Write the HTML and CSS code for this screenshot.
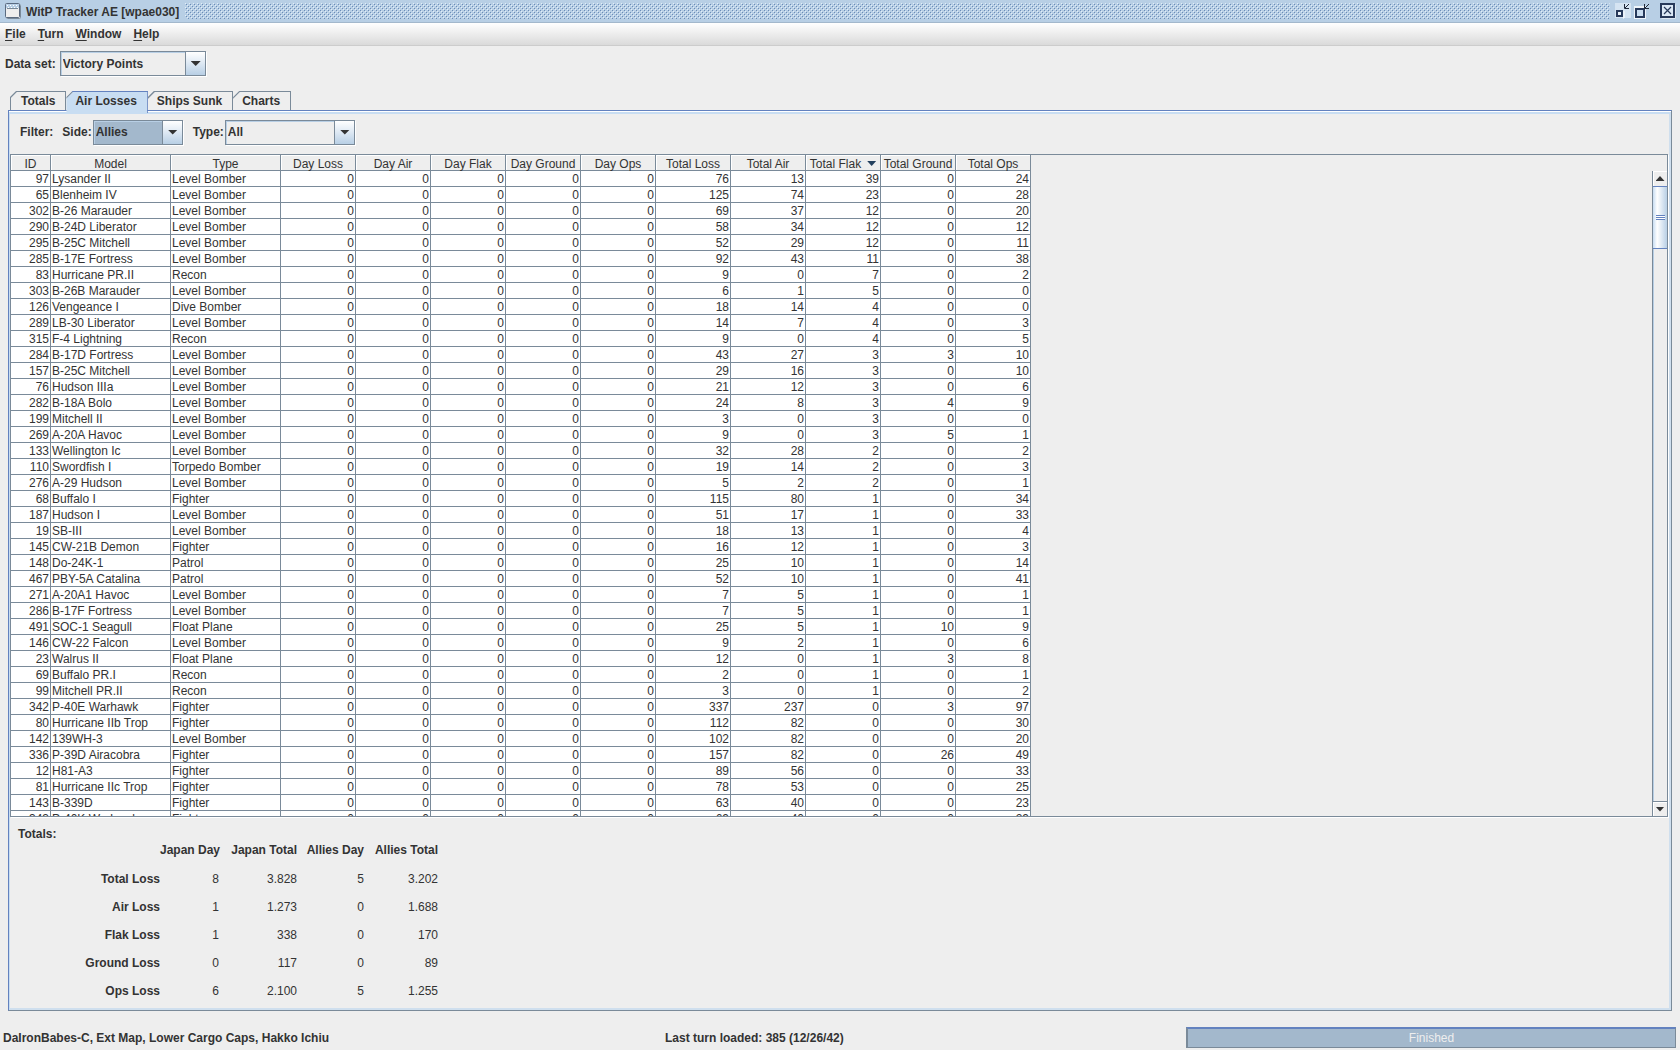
FILE: index.html
```html
<!DOCTYPE html>
<html lang="en">
<head>
<meta charset="utf-8">
<title>WitP Tracker AE [wpae030]</title>
<link rel="stylesheet" href="styles.css">
</head>
<body>
<header class="titlebar">
  <svg class="app-icon" width="16" height="16" aria-hidden="true">
    <rect x="1.5" y="1.5" width="14" height="14" rx="1" fill="#fff" stroke="#7a8a99"/>
    <rect x="0.5" y="0.5" width="14" height="14" rx="1" fill="#eee" stroke="#5b6b80"/>
    <rect x="1" y="1" width="13" height="4" fill="#b8cfe5"/>
    <path d="M2 2.5h11M3 4.5h10" stroke="#fff" stroke-dasharray="1 2"/>
    <path d="M2 5.5h11" stroke="#7a8a99"/>
  </svg>
  <h1 class="title">WitP Tracker AE [wpae030]</h1>
  <svg class="bumps" aria-hidden="true">
    <defs>
      <pattern id="bump" width="4" height="4" patternUnits="userSpaceOnUse">
        <rect width="1" height="1" fill="#e2edf8"/><rect x="1" y="1" width="1" height="1" fill="#6b8cb8"/>
        <rect x="2" y="2" width="1" height="1" fill="#e2edf8"/><rect x="3" y="3" width="1" height="1" fill="#6b8cb8"/>
      </pattern>
    </defs>
    <rect width="100%" height="100%" fill="url(#bump)"/>
  </svg>
  <div class="window-buttons">
    <button class="window-button" aria-label="Minimize">
      <svg width="16" height="16"><path d="M0 0h16v15H0z" fill="#d5e4f2"/><path d="M8 15h1V8" fill="none" stroke="#fff"/><rect x="2" y="8" width="5" height="5" fill="#e8f0f8" stroke="#27395a" stroke-width="2"/><path d="M14 1L10 5M9.500 1v4.500H14" fill="none" stroke="#1c2638"/></svg>
    </button>
    <button class="window-button" aria-label="Restore">
      <svg width="16" height="16"><path d="M0 3h12v13H0z" fill="#eef4fa"/><rect x="2" y="6" width="8" height="8" fill="#c9dcef" stroke="#27395a" stroke-width="2"/><path d="M15 1L11 5M10.500 1v4.500H15" fill="none" stroke="#1c2638"/></svg>
    </button>
    <button class="window-button close" aria-label="Close">
      <svg width="16" height="16"><rect x="2" y="2" width="13" height="13" fill="none" stroke="#fff"/><rect x="1" y="1" width="13" height="13" fill="#dbe8f5" stroke="#27395a" stroke-width="2"/><path d="M4 4l7 7M11 4l-7 7" stroke="#27395a" stroke-width="1.200"/></svg>
    </button>
  </div>
</header>
<nav class="menubar">
  <button class="menu"><u>F</u>ile</button>
  <button class="menu"><u>T</u>urn</button>
  <button class="menu"><u>W</u>indow</button>
  <button class="menu"><u>H</u>elp</button>
</nav>
<div class="toolbar">
  <label for="dataset">Data set:</label>
  <span class="combo combo-dataset"><select id="dataset"><option>Victory Points</option></select></span>
</div>
<main class="workspace">
  <div class="tabs" role="tablist">
    <button class="tab" role="tab" aria-selected="false">Totals</button>
    <button class="tab selected" role="tab" aria-selected="true">Air Losses</button>
    <button class="tab" role="tab" aria-selected="false">Ships Sunk</button>
    <button class="tab" role="tab" aria-selected="false">Charts</button>
  </div>
  <section class="panel" role="tabpanel">
    <div class="filters">
      <span class="filter-title">Filter:</span>
      <label for="side">Side:</label>
      <span class="combo combo-side"><select id="side"><option>Allies</option></select></span>
      <label class="type-label" for="type">Type:</label>
      <span class="combo combo-type"><select id="type"><option>All</option></select></span>
    </div>
    <div class="scrollpane">
      <div class="viewport">
        <table class="losses">
          <colgroup><col class="col-id"><col class="col-model"><col class="col-type"><col class="col-num" span="10"></colgroup>
          <thead>
            <tr><th>ID</th><th>Model</th><th>Type</th><th>Day Loss</th><th>Day Air</th><th>Day Flak</th><th>Day Ground</th><th>Day Ops</th><th>Total Loss</th><th>Total Air</th><th class="sorted">Total Flak</th><th>Total Ground</th><th>Total Ops</th></tr>
          </thead>
          <tbody id="loss-rows"></tbody>
        </table>
      </div>
      <div class="scrollbar">
        <button class="scroll-button up" aria-label="Scroll up"></button>
        <div class="track"><div class="thumb"></div></div>
        <button class="scroll-button down" aria-label="Scroll down"></button>
      </div>
    </div>
    <div class="summary">
      <h2 class="summary-title">Totals:</h2>
      <table class="totals">
        <colgroup><col class="sum-label"><col class="sum-a"><col class="sum-b"><col class="sum-c"><col class="sum-d"></colgroup>
        <thead><tr><td></td><th>Japan Day</th><th>Japan Total</th><th>Allies Day</th><th>Allies Total</th></tr></thead>
        <tbody>
          <tr><th>Total Loss</th><td>8</td><td>3.828</td><td>5</td><td>3.202</td></tr>
          <tr><th>Air Loss</th><td>1</td><td>1.273</td><td>0</td><td>1.688</td></tr>
          <tr><th>Flak Loss</th><td>1</td><td>338</td><td>0</td><td>170</td></tr>
          <tr><th>Ground Loss</th><td>0</td><td>117</td><td>0</td><td>89</td></tr>
          <tr><th>Ops Loss</th><td>6</td><td>2.100</td><td>5</td><td>1.255</td></tr>
        </tbody>
      </table>
    </div>
  </section>
</main>
<footer class="status">
  <span>DaIronBabes-C, Ext Map, Lower Cargo Caps, Hakko Ichiu</span>
  <span>Last turn loaded: 385 (12/26/42)</span>
  <div class="progress">Finished</div>
</footer>
<script src="app.js"></script>
</body>
</html>
```
FILE: styles.css
```css
* { box-sizing: border-box; }

:root {
  --line: #7a8a99;
  --blue: #6382bf;
  --tint: #c8ddf2;
  --face: #eeeeee;
  --text: #333333;
}

body {
  margin: 0;
  height: 100vh;
  display: flex;
  flex-direction: column;
  overflow: hidden;
  background: var(--face);
  color: var(--text);
  font: bold 12px/16px "Liberation Sans", Arial, sans-serif;
}

button, select { font: inherit; color: inherit; margin: 0; padding: 0; border: 0; background: none; }

/* Title bar */
.titlebar {
  display: flex;
  align-items: center;
  flex: none;
  height: 23px;
  padding: 0 4px 0 5px;
  background: #b8cfe5;
  border-bottom: 1px solid #a3b8cc;
}
.app-icon { flex: none; margin-right: 5px; }
.title { margin: 0 6px 0 0; padding-top: 1px; font-size: 12px; }
.bumps { flex: 1; min-width: 0; height: 16px; }
.window-buttons { display: flex; gap: 3px; margin-left: 5px; }
.window-button { display: flex; width: 16px; height: 16px; }
.close { margin-left: 7px; }

/* Menu bar */
.menubar {
  display: flex;
  flex: none;
  gap: 12px;
  height: 23px;
  padding: 0 5px;
  background: linear-gradient(#ffffff, #dadada);
  border-bottom: 1px solid #cccccc;
}
.menu u { text-underline-offset: 2px; }

/* Combo boxes */
.toolbar { display: flex; align-items: center; flex: none; gap: 4px; height: 36px; padding: 0 5px 1px; }
.combo { display: grid; height: 25px; border: 1px solid var(--line); box-shadow: inset 1px 1px #b8cfe5, 1px 1px #ffffff; }
.combo::before {
  content: "";
  grid-area: 1 / 1;
  justify-self: end;
  width: 19px;
  border-left: 1px solid var(--line);
  background: linear-gradient(#ffffff, #dde8f3 50%, #b8cfe5);
}
.combo::after {
  content: "";
  grid-area: 1 / 1;
  place-self: center end;
  width: 10px;
  height: 5px;
  margin-right: 4px;
  background: var(--text);
  clip-path: polygon(0 0, 100% 0, 50% 100%);
  pointer-events: none;
}
.combo select { grid-area: 1 / 1; min-width: 0; padding-left: 2px; appearance: none; outline: 0; }
.combo-dataset { width: 146px; }
.combo-side { width: 90px; background: #a3b8cc; }
.combo-type { width: 130px; }

/* Tabs */
.workspace { display: flex; flex: 1; flex-direction: column; min-height: 0; padding: 9px 8px 0; }
.tabs { display: flex; flex: none; height: 19px; padding-left: 2px; }
.tab {
  height: 19px;
  padding: 0 10px 0 9px;
  border-top: 1px solid var(--line);
  border-right: 1px solid var(--line);
  background: linear-gradient(135deg, var(--line) 0 5px, transparent 6px) border-box;
  clip-path: polygon(0 6px, 6px 0, 100% 0, 100% 100%, 0 100%);
}
.tab:first-child { padding-left: 10px; border-left: 1px solid var(--line); }
.tab.selected {
  position: relative;
  height: 22px;
  margin-bottom: -3px;
  padding-bottom: 3px;
  border-color: var(--blue);
  background: linear-gradient(135deg, var(--line) 0 5px, var(--tint) 6px) border-box;
}

.panel {
  display: flex;
  flex: 1;
  flex-direction: column;
  min-height: 0;
  padding: 2px 1px;
  border: 1px solid var(--line);
  border-top-color: var(--blue);
  border-left-color: var(--blue);
  box-shadow: inset 0 1px #ffffff, inset 1px 3px var(--tint), inset -2px -2px #cfdfee;
}
.filters { display: flex; align-items: center; flex: none; height: 41px; padding: 0 10px 3px; gap: 1px; }
.filter-title { margin-right: 8px; }
.type-label { margin-left: 9px; }

/* Loss table */
.scrollpane {
  display: flex;
  flex: 1;
  min-height: 0;
  margin-right: 2px;
  border: 1px solid var(--line);
  box-shadow: 1px 1px #ffffff;
}
.viewport { flex: 1; min-width: 0; overflow: hidden; }
.losses { width: 1020px; table-layout: fixed; border-spacing: 0; font-weight: normal; line-height: 13px; }
.col-id { width: 40px; }
.col-model { width: 120px; }
.col-type { width: 110px; }
.col-num { width: 75px; }
.losses th, .losses td {
  height: 16px;
  padding: 2px 1px 0;
  border-right: 1px solid var(--line);
  border-bottom: 1px solid var(--line);
  white-space: nowrap;
}
.losses th { padding-top: 4px; font-weight: normal; line-height: 11px; background: var(--face); box-shadow: inset 1px 1px #ffffff; }
.losses td { text-align: right; background: #ffffff; }
.losses td.name { text-align: left; }
.sorted::after {
  content: "";
  display: inline-block;
  width: 9px;
  height: 5px;
  margin: 0 0 2px 6px;
  background: #24405e;
  clip-path: polygon(0 0, 100% 0, 50% 100%);
}

.scrollbar { display: flex; flex: none; flex-direction: column; width: 15px; margin-top: 16px; border-left: 1px solid var(--line); }
.scroll-button { display: grid; flex: none; place-content: center; height: 15px; box-shadow: inset 1px 1px #ffffff; }
.scroll-button::before { content: ""; width: 9px; height: 5px; background: var(--text); }
.up::before { clip-path: polygon(50% 0, 100% 100%, 0 100%); }
.down::before { clip-path: polygon(0 0, 100% 0, 50% 100%); }
.down { border-top: 1px solid var(--line); }
.track { flex: 1; box-shadow: inset 1px 0 #b8cfe5; }
.thumb {
  display: grid;
  height: 63px;
  place-content: center;
  border: solid var(--blue);
  border-width: 1px 0;
  background: linear-gradient(90deg, #c8ddf2, #ffffff 30%, #b8cfe5);
}
.thumb::before { content: ""; width: 9px; height: 5px; background: repeating-linear-gradient(var(--blue) 0 1px, #ffffff 1px 2px); }

/* Summary */
.summary { flex: none; padding: 9px 8px 3px; }
.summary-title { margin: 0; font-size: 12px; }
.totals { table-layout: fixed; width: 420px; border-spacing: 0; }
.totals th, .totals td { height: 28px; padding: 0; text-align: right; white-space: nowrap; }
.totals thead th, .totals thead td { height: 23px; padding-top: 1px; line-height: 14px; vertical-align: top; }
.totals td { font-weight: normal; }
.sum-label { width: 142px; }
.sum-a { width: 59px; }
.sum-b { width: 78px; }
.sum-c { width: 67px; }
.sum-d { width: 74px; }

/* Status bar */
.status {
  display: grid;
  flex: none;
  grid-template-columns: 662px 1fr 490px;
  align-items: center;
  height: 39px;
  padding: 14px 4px 0 3px;
}
.progress {
  height: 21px;
  border: 1px solid var(--line);
  border-top: 2px solid var(--blue);
  border-left-width: 2px;
  background: #a3b8cc;
  color: #eeeeee;
  font-weight: normal;
  line-height: 18px;
  text-align: center;
}
```
FILE: app.js
```javascript
// id, model, type, total loss, total air, total flak, total ground, total ops
const losses = `97|Lysander II|Level Bomber|76|13|39|0|24
65|Blenheim IV|Level Bomber|125|74|23|0|28
302|B-26 Marauder|Level Bomber|69|37|12|0|20
290|B-24D Liberator|Level Bomber|58|34|12|0|12
295|B-25C Mitchell|Level Bomber|52|29|12|0|11
285|B-17E Fortress|Level Bomber|92|43|11|0|38
83|Hurricane PR.II|Recon|9|0|7|0|2
303|B-26B Marauder|Level Bomber|6|1|5|0|0
126|Vengeance I|Dive Bomber|18|14|4|0|0
289|LB-30 Liberator|Level Bomber|14|7|4|0|3
315|F-4 Lightning|Recon|9|0|4|0|5
284|B-17D Fortress|Level Bomber|43|27|3|3|10
157|B-25C Mitchell|Level Bomber|29|16|3|0|10
76|Hudson IIIa|Level Bomber|21|12|3|0|6
282|B-18A Bolo|Level Bomber|24|8|3|4|9
199|Mitchell II|Level Bomber|3|0|3|0|0
269|A-20A Havoc|Level Bomber|9|0|3|5|1
133|Wellington Ic|Level Bomber|32|28|2|0|2
110|Swordfish I|Torpedo Bomber|19|14|2|0|3
276|A-29 Hudson|Level Bomber|5|2|2|0|1
68|Buffalo I|Fighter|115|80|1|0|34
187|Hudson I|Level Bomber|51|17|1|0|33
19|SB-III|Level Bomber|18|13|1|0|4
145|CW-21B Demon|Fighter|16|12|1|0|3
148|Do-24K-1|Patrol|25|10|1|0|14
467|PBY-5A Catalina|Patrol|52|10|1|0|41
271|A-20A1 Havoc|Level Bomber|7|5|1|0|1
286|B-17F Fortress|Level Bomber|7|5|1|0|1
491|SOC-1 Seagull|Float Plane|25|5|1|10|9
146|CW-22 Falcon|Level Bomber|9|2|1|0|6
23|Walrus II|Float Plane|12|0|1|3|8
69|Buffalo PR.I|Recon|2|0|1|0|1
99|Mitchell PR.II|Recon|3|0|1|0|2
342|P-40E Warhawk|Fighter|337|237|0|3|97
80|Hurricane IIb Trop|Fighter|112|82|0|0|30
142|139WH-3|Level Bomber|102|82|0|0|20
336|P-39D Airacobra|Fighter|157|82|0|26|49
12|H81-A3|Fighter|89|56|0|0|33
81|Hurricane IIc Trop|Fighter|78|53|0|0|25
143|B-339D|Fighter|63|40|0|0|23
343|P-40K Warhawk|Fighter|69|40|0|0|29`;

const body = document.getElementById("loss-rows");
for (const line of losses.split("\n")) {
  const [id, model, type, ...totals] = line.split("|");
  const row = body.insertRow();
  [id, model, type, 0, 0, 0, 0, 0, ...totals].forEach((value, i) => {
    const cell = row.insertCell();
    cell.textContent = value;
    if (i === 1 || i === 2) cell.className = "name";
  });
}
```
